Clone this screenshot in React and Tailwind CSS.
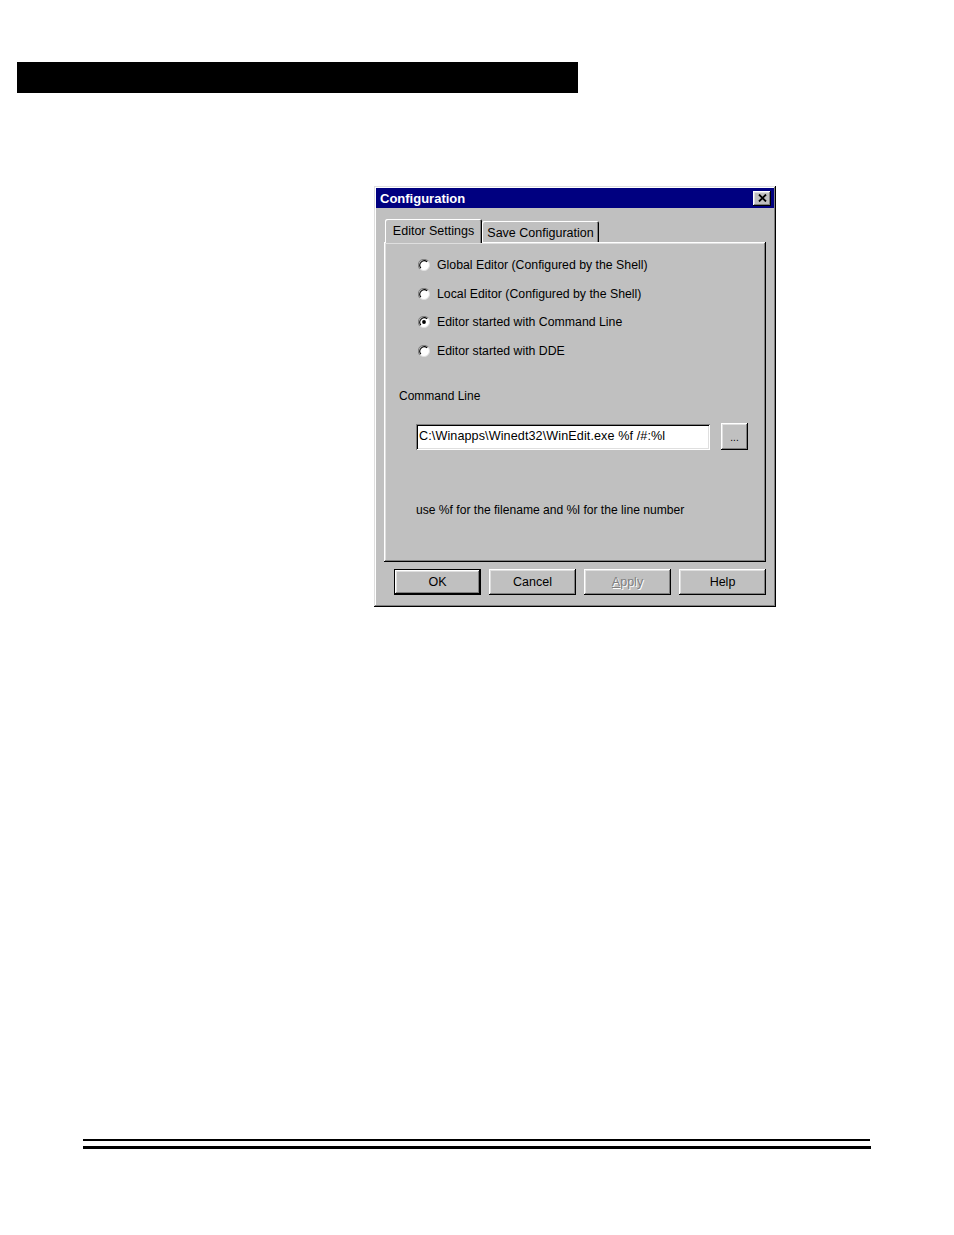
import React from "react";

const raised =
  "shadow-[inset_-1px_-1px_#000,inset_1px_1px_#fff,inset_-2px_-2px_#808080,inset_2px_2px_#dfdfdf]";

function Radio({ checked }) {
  return (
    <svg width="12" height="12" viewBox="0 0 12 12" className="shrink-0">
      <circle cx="6" cy="6" r="5.5" fill="#ffffff" stroke="#dfdfdf" strokeWidth="1" />
      <path d="M10.2 2.2A5.5 5.5 0 0 0 1.8 9.8" fill="none" stroke="#808080" strokeWidth="1.1" />
      <path d="M9.1 2.9A4.4 4.4 0 0 0 2.9 9.1" fill="none" stroke="#000" strokeWidth="1.1" />
      {checked && <circle cx="6" cy="6" r="1.9" fill="#000" />}
    </svg>
  );
}

function RadioRow({ label, checked }) {
  return (
    <div className="flex h-[28.5px] items-center">
      <div className="ml-[34px] flex w-[19px]">
        <Radio checked={checked} />
      </div>
      <span className="text-[12.3px]">{label}</span>
    </div>
  );
}

function Btn({ children, def, disabled }) {
  return (
    <div
      className={
        "flex h-[26px] w-[87px] items-center justify-center " +
        (def
          ? "shadow-[inset_-1px_-1px_#000,inset_1px_1px_#000,inset_-2px_-2px_#000,inset_2px_2px_#fff,inset_-3px_-3px_#808080,inset_3px_3px_#dfdfdf]"
          : raised)
      }
    >
      {disabled ? (
        <span className="text-[#808080] [text-shadow:1px_1px_0_#fff]">
          <span className="underline">A</span>pply
        </span>
      ) : (
        children
      )}
    </div>
  );
}

export default function App() {
  return (
    <div
      className="flex h-[1235px] w-[954px] flex-col bg-white text-[12px] text-black"
      style={{ fontFamily: '"Liberation Sans", Arial, sans-serif' }}
    >
      <div className="ml-[17px] mt-[62px] h-[31px] w-[561px] bg-black" />

      <div
        className={
          "ml-[374px] mt-[93px] flex h-[421px] w-[402px] flex-col bg-[#c0c0c0] p-[2px] " +
          "shadow-[inset_-1px_-1px_#000,inset_1px_1px_#dfdfdf,inset_-2px_-2px_#808080,inset_2px_2px_#fff]"
        }
      >
        {/* title bar */}
        <div className="flex h-[20px] items-center justify-between bg-[#000080] pl-[4px] pr-[3px]">
          <span className="text-[13px] font-bold leading-none text-white">Configuration</span>
          <div className={"flex h-[15px] w-[18px] items-center justify-center bg-[#c0c0c0] " + raised}>
            <svg width="9" height="8" viewBox="0 0 9 8">
              <path d="M1 0.5L8 7.5M8 0.5L1 7.5" stroke="#000" strokeWidth="1.8" />
            </svg>
          </div>
        </div>

        {/* tabs */}
        <div className="ml-[8px] mt-[11px] flex h-[23px] items-end">
          <div className="relative z-10 -mb-[1px] ml-[1px] flex h-[24px] w-[97px] items-start justify-center rounded-t-[2px] bg-[#c0c0c0] pt-[3px] shadow-[inset_1px_1px_#fff,inset_-1px_0_#000,inset_-2px_0_#808080]">
            <span className="text-[12.5px]">Editor Settings</span>
          </div>
          <div className="flex h-[21px] w-[117px] items-start justify-center rounded-t-[2px] pt-[3px] shadow-[inset_1px_1px_#fff,inset_-1px_0_#000,inset_-2px_0_#808080]">
            <span className="text-[12.5px]">Save Configuration</span>
          </div>
        </div>

        {/* panel */}
        <div className="mx-[8px] flex h-[320px] flex-col shadow-[inset_-1px_-1px_#000,inset_1px_1px_#fff,inset_-2px_-2px_#808080,inset_2px_2px_#dfdfdf]">
          <div className="mt-[9px] flex flex-col">
            <RadioRow label="Global Editor (Configured by the Shell)" />
            <RadioRow label="Local Editor (Configured by the Shell)" />
            <RadioRow label="Editor started with Command Line" checked />
            <RadioRow label="Editor started with DDE" />
          </div>

          <div className="ml-[15px] mt-[23px] h-[16px] leading-[16px]">Command Line</div>

          <div className="ml-[32px] mt-[20px] flex items-center">
            <div className="flex h-[26px] w-[294px] items-center bg-white pb-[2px] pl-[3px] shadow-[inset_1px_1px_#808080,inset_-1px_-1px_#fff,inset_2px_2px_#000,inset_-2px_-2px_#dfdfdf]">
              <span className="text-[12.6px] tracking-[0.1px]">C:\Winapps\Winedt32\WinEdit.exe %f /#:%l</span>
            </div>
            <div className={"ml-[11px] -mt-[1px] flex h-[27px] w-[27px] items-end justify-center pb-[7px] text-[10px] leading-none " + raised}>
              ...
            </div>
          </div>

          <div className="ml-[32px] mt-[52px] h-[16px] leading-[16px] text-[12.1px]">
            use %f for the filename and %l for the line number
          </div>
        </div>

        {/* buttons */}
        <div className="ml-[18px] mt-[7px] flex gap-[8px] text-[12.5px]">
          <Btn def>OK</Btn>
          <Btn>Cancel</Btn>
          <Btn disabled>Apply</Btn>
          <Btn>Help</Btn>
        </div>
      </div>

      <div className="ml-[83px] mt-[532px] h-[1.5px] w-[787px] bg-black" />
      <div className="ml-[83px] mt-[5.5px] h-[3px] w-[788px] bg-black" />
    </div>
  );
}
